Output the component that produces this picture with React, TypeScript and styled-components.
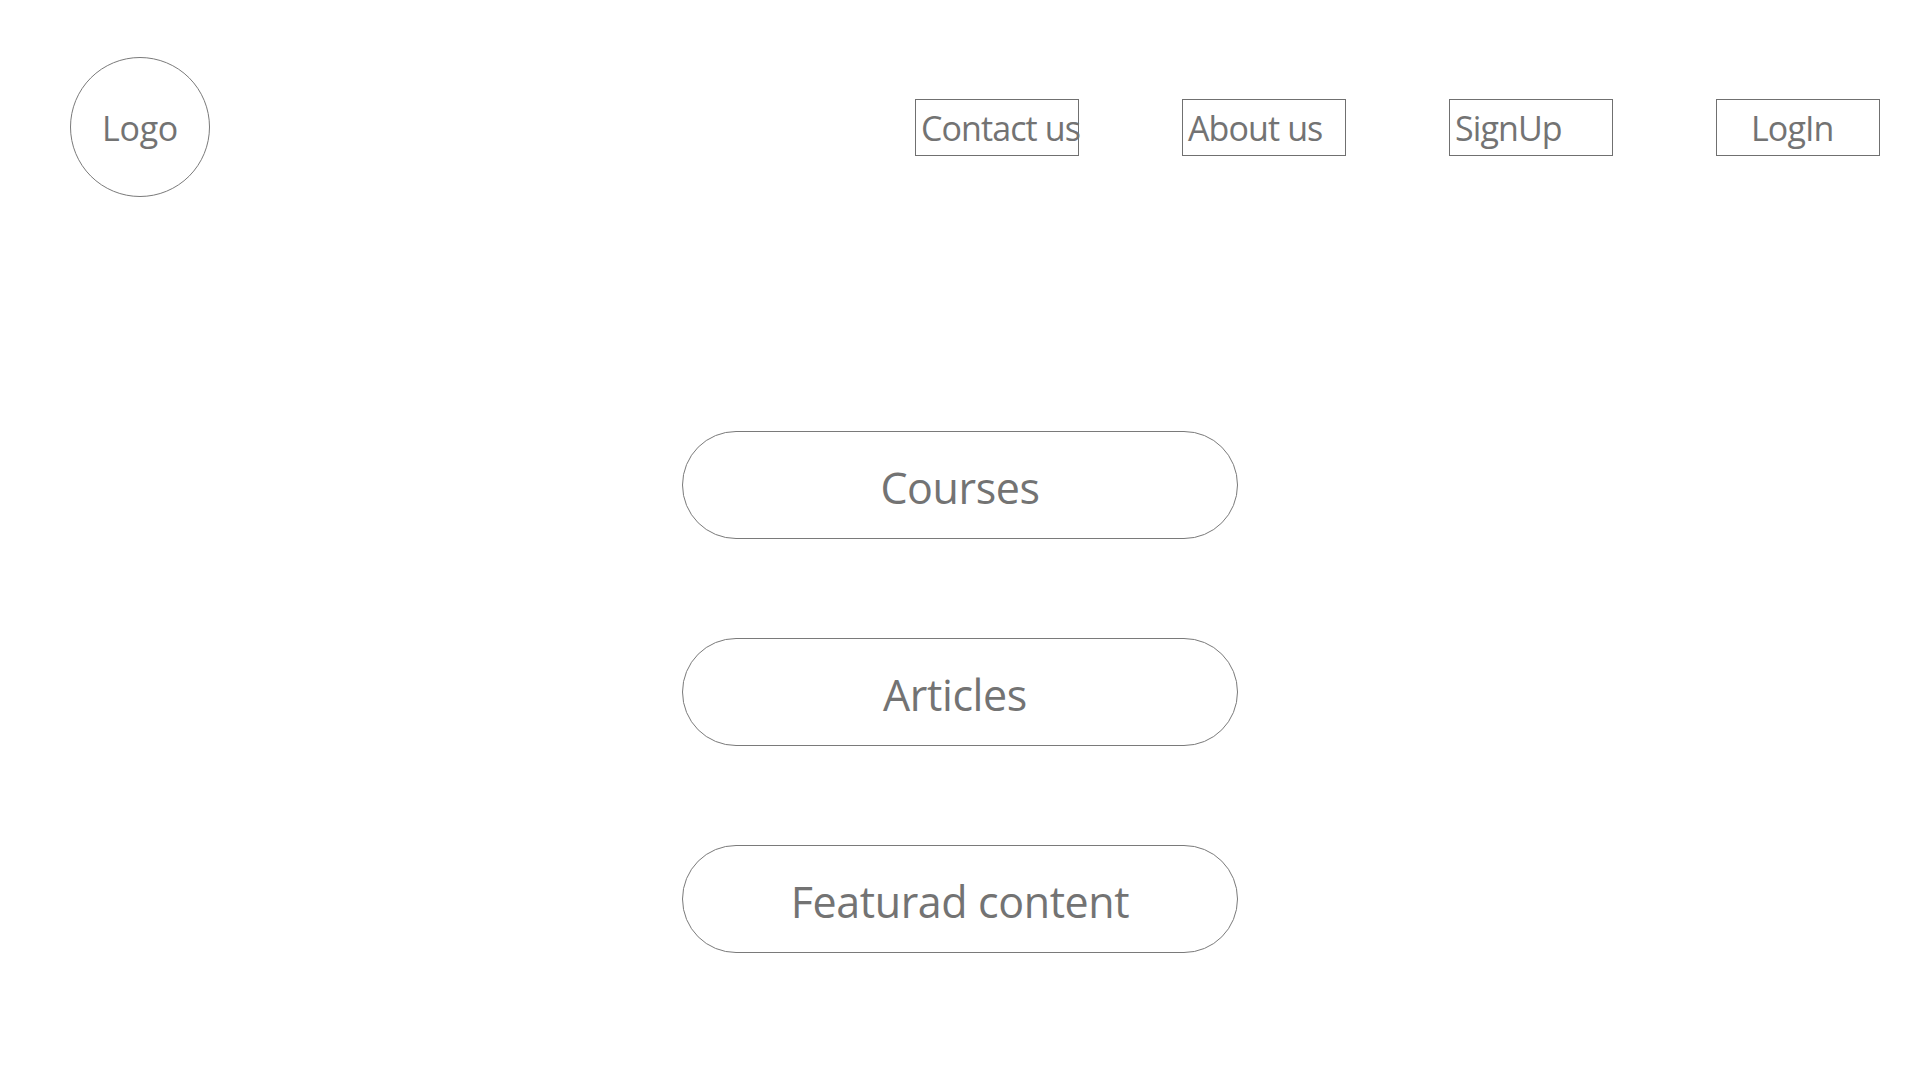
import React from "react";
import styled, { createGlobalStyle } from "styled-components";

const GlobalStyle = createGlobalStyle`
  html, body {
    margin: 0;
    padding: 0;
    background: #ffffff;
  }
  body {
    font-family: "Open Sans", "Noto Sans", sans-serif;
    color: #737373;
  }
`;

const Page = styled.div`
  width: 1920px;
  min-height: 1080px;
  box-sizing: border-box;
  display: flex;
  flex-direction: column;
`;

const Header = styled.header`
  display: flex;
  align-items: center;
  padding: 57px 40px 0 70px;
`;

const Logo = styled.div`
  width: 140px;
  height: 140px;
  box-sizing: border-box;
  border: 1px solid #7a7a7a;
  border-radius: 50%;
  display: flex;
  align-items: center;
  justify-content: center;
  padding-top: 2px;
  font-size: 34px;
  letter-spacing: -0.3px;
  color: #737373;
`;

const Nav = styled.nav`
  margin-left: auto;
  display: flex;
  gap: 103px;
`;

const NavBox = styled.a<{ $indent?: number }>`
  width: 164px;
  height: 57px;
  box-sizing: border-box;
  border: 1px solid #707070;
  display: flex;
  align-items: center;
  padding-left: ${(p) => p.$indent ?? 5}px;
  padding-top: 2px;
  font-size: 34px;
  letter-spacing: -0.9px;
  color: #737373;
  white-space: nowrap;
  overflow: visible;
  text-decoration: none;
`;

const Main = styled.main`
  display: flex;
  flex-direction: column;
  align-items: center;
  gap: 99px;
  margin-top: 234px;
`;

const Pill = styled.div<{ $shift?: number }>`
  width: 556px;
  height: 108px;
  box-sizing: border-box;
  border: 1px solid #7a7a7a;
  border-radius: 54px;
  display: flex;
  align-items: center;
  justify-content: center;
  padding-top: 4px;
  padding-right: ${(p) => (p.$shift ?? 0) * 2}px;
  font-size: 43px;
  letter-spacing: -0.4px;
  color: #737373;
`;

const navItems = [
  { label: "Contact us", indent: 5 },
  { label: "About us", indent: 5 },
  { label: "SignUp", indent: 5 },
  { label: "LogIn", indent: 34 },
];

const pills = [
  { label: "Courses", shift: 0 },
  { label: "Articles", shift: 5 },
  { label: "Featurad content", shift: 0 },
];

export default function App() {
  return (
    <Page>
      <GlobalStyle />
      <Header>
        <Logo>Logo</Logo>
        <Nav>
          {navItems.map((n) => (
            <NavBox key={n.label} $indent={n.indent}>
              {n.label}
            </NavBox>
          ))}
        </Nav>
      </Header>
      <Main>
        {pills.map((p) => (
          <Pill key={p.label} $shift={p.shift}>
            {p.label}
          </Pill>
        ))}
      </Main>
    </Page>
  );
}
